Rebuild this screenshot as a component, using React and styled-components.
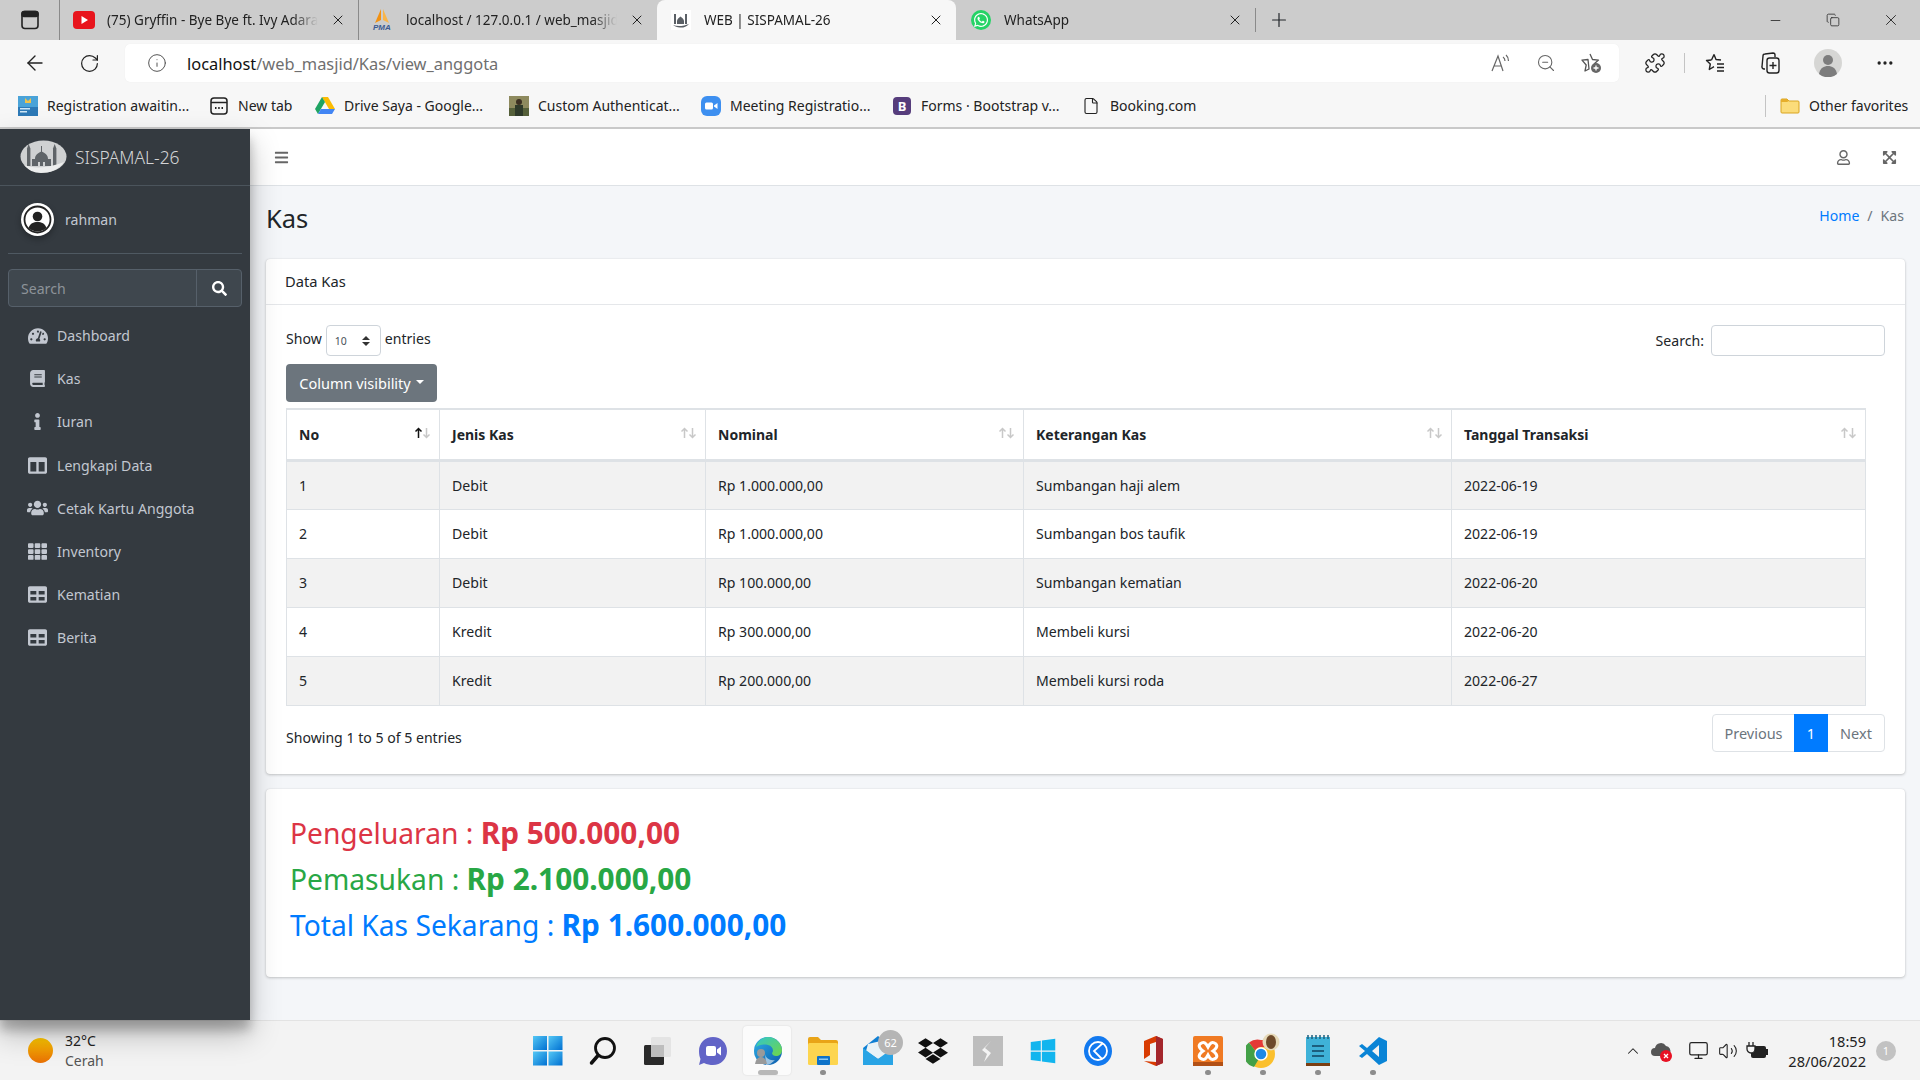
import React from "react"
import styled, { createGlobalStyle } from "styled-components"
import {
  ArrowLeft,
  RotateCw,
  Info,
  ZoomOut,
  Puzzle,
  X,
  Plus,
  Minus,
  Copy,
  MoreHorizontal,
  ChevronUp,
  Volume2,
  Monitor,
  File,
} from "lucide-react"
import {
  FaTachometerAlt,
  FaBook,
  FaInfo,
  FaColumns,
  FaUsers,
  FaTh,
  FaTable,
  FaSearch,
  FaRegUser,
  FaExpandArrowsAlt,
  FaBars,
  FaWhatsapp,
  FaDropbox,
  FaWindows,
} from "react-icons/fa"

const GlobalStyle = createGlobalStyle`
  html, body { margin: 0; padding: 0; height: 100%; }
  body {
    font-family: "Noto Sans", "Open Sans", sans-serif;
    font-size: 14.1px;
    color: #212529;
    overflow: hidden;
  }
  * { box-sizing: border-box; }
`

const Shell = styled.div`
  width: 1920px;
  height: 1080px;
  display: flex;
  flex-direction: column;
  overflow: hidden;
`

/* browser chrome */
const TabStrip = styled.div`
  height: 40px;
  background: #cccccc;
  display: flex;
  align-items: stretch;
  flex-shrink: 0;
`
const PanelButton = styled.div`
  width: 59px;
  display: flex;
  align-items: center;
  justify-content: center;
`
const Tab = styled.div`
  width: 299px;
  display: flex;
  align-items: center;
  padding: 0 12px 0 ${props => (props.$active ? "12px" : "13px")};
  gap: 12px;
  font-size: 13.5px;
  color: #222;
  background: ${props => (props.$active ? "#f7f7f7" : "transparent")};
  border-radius: ${props => (props.$active ? "8px 8px 0 0" : "0")};
  border-left: 1px solid ${props => (props.$line ? "#8a8a8a" : "transparent")};
  background-clip: ${props => (props.$line ? "padding-box" : "border-box")};
`
const TabIcon = styled.div`
  width: 22px;
  height: 22px;
  display: flex;
  align-items: center;
  justify-content: center;
  flex-shrink: 0;
`
const TabTitle = styled.div`
  flex: 1;
  white-space: nowrap;
  overflow: hidden;
  -webkit-mask-image: linear-gradient(to right, #000 88%, transparent 100%);
  mask-image: linear-gradient(to right, #000 88%, transparent 100%);
`
const NewTab = styled.div`
  width: 46px;
  display: flex;
  align-items: center;
  justify-content: center;
  border-left: 1px solid #8a8a8a;
  margin: 8px 0;
`
const WindowControls = styled.div`
  margin-left: auto;
  display: flex;
  align-items: center;
`
const WindowButton = styled.div`
  width: 58px;
  display: flex;
  justify-content: center;
  color: #222;
`

const Toolbar = styled.div`
  height: 46px;
  background: #f7f7f7;
  display: flex;
  align-items: center;
  flex-shrink: 0;
`
const ToolButton = styled.div`
  width: ${props => props.$w || 45}px;
  display: flex;
  justify-content: center;
  align-items: center;
  color: ${props => props.$color || "#222"};
  flex-shrink: 0;
`
const NavButtons = styled.div`
  display: flex;
  width: 125px;
  padding-left: 12px;
`
const AddressBar = styled.div`
  width: 1494px;
  height: 38px;
  background: #fff;
  border-radius: 5px;
  display: flex;
  align-items: center;
  padding: 0 5px 0 22px;
  box-shadow: 0 0 1px rgba(0, 0, 0, 0.08);
`
const Url = styled.div`
  margin-left: 20px;
  font-size: 16.4px;
  color: #6f6f6f;
  flex: 1;
  span { color: #111; }
`
const ToolDivider = styled.div`
  width: 1px;
  height: 20px;
  background: #c4c4c4;
  margin-left: 6px;
`
const RightTools = styled.div`
  display: flex;
  align-items: center;
  margin-left: 13px;
`

const BookmarkBar = styled.div`
  height: 43px;
  background: #f7f7f7;
  border-bottom: 2px solid #c9c9c9;
  display: flex;
  align-items: center;
  padding: 0 0 2px 18px;
  flex-shrink: 0;
  font-size: 14px;
  color: #222;
`
const Bookmark = styled.div`
  width: ${props => props.$w}px;
  display: flex;
  align-items: center;
  gap: 9px;
  white-space: nowrap;
  flex-shrink: 0;
`
const BookmarkIcon = styled.div`
  width: 20px;
  height: 20px;
  display: flex;
  align-items: center;
  justify-content: center;
  flex-shrink: 0;
`
const BarDivider = styled.div`
  width: 1px;
  height: 22px;
  background: #c4c4c4;
  margin-right: 14px;
  flex-shrink: 0;
`
const BootstrapBadge = styled.div`
  width: 18px;
  height: 18px;
  border-radius: 4px;
  background: #563d7c;
  color: #fff;
  font-size: 13px;
  font-weight: 700;
  display: flex;
  align-items: center;
  justify-content: center;
`

/* admin page */
const Page = styled.div`
  flex: 1;
  min-height: 0;
  display: flex;
  background: #f4f6f9;
`
const Sidebar = styled.aside`
  width: 250px;
  background: #343a40;
  flex-shrink: 0;
  color: #c2c7d0;
  box-shadow: 0 14px 28px rgba(0, 0, 0, 0.25), 0 10px 10px rgba(0, 0, 0, 0.22);
  position: relative;
  z-index: 2;
`
const Brand = styled.div`
  height: 57px;
  border-bottom: 1px solid #4b545c;
  display: flex;
  align-items: center;
  padding-left: 20px;
  gap: 8px;
  font-size: 17.4px;
  font-weight: 300;
  color: rgba(255, 255, 255, 0.8);
`
const UserPanel = styled.div`
  margin: 0 8px;
  height: 68px;
  border-bottom: 1px solid #4f5962;
  display: flex;
  align-items: center;
  gap: 11px;
  padding: 0 0 1px 13px;
`
const Avatar = styled.div`
  width: 33px;
  height: 33px;
  border-radius: 50%;
  background: #fff;
  display: flex;
  align-items: center;
  justify-content: center;
  box-shadow: 0 3px 6px rgba(0, 0, 0, 0.3);
`
const SideSearch = styled.div`
  margin: 15px 8px 0;
  height: 38px;
  display: flex;
  border: 1px solid #56606a;
  border-radius: 4px;
  background: #3f474e;
  overflow: hidden;
`
const SideInput = styled.div`
  flex: 1;
  padding-left: 12px;
  display: flex;
  align-items: center;
  color: #8d9399;
`
const SideSearchButton = styled.div`
  width: 45px;
  border-left: 1px solid #56606a;
  display: flex;
  align-items: center;
  justify-content: center;
  color: #fff;
`
const NavList = styled.nav`
  margin-top: 7px;
`
const NavItem = styled.div`
  height: 43.2px;
  display: flex;
  align-items: center;
`
const NavIcon = styled.div`
  width: 57px;
  padding: 0 9px 0 27px;
  display: flex;
  justify-content: center;
  flex-shrink: 0;
`

const Main = styled.main`
  flex: 1;
  min-width: 0;
  display: flex;
  flex-direction: column;
`
const TopNav = styled.div`
  height: 57px;
  background: #fff;
  border-bottom: 1px solid #dee2e6;
  display: flex;
  align-items: center;
  justify-content: space-between;
  padding: 0 23px 0 24px;
  color: rgba(0, 0, 0, 0.6);
  flex-shrink: 0;
`
const TopNavRight = styled.div`
  display: flex;
  align-items: center;
  gap: 31px;
`
const ContentHeader = styled.div`
  height: 73px;
  padding: 0 16px 10px 16px;
  display: flex;
  align-items: center;
  justify-content: space-between;
  flex-shrink: 0;
`
const Title = styled.h1`
  margin: 0;
  font-size: 25.5px;
  font-weight: 400;
  color: #212529;
`
const Breadcrumb = styled.div`
  color: #6c757d;
  display: flex;
  gap: 8px;
  margin-top: -5px;
  a { color: #007bff; }
`
const Card = styled.section`
  margin: 0 15px 15px 16px;
  background: #fff;
  border-radius: 4px;
  box-shadow: 0 0 1px rgba(0, 0, 0, 0.125), 0 1px 3px rgba(0, 0, 0, 0.2);
`
const CardHeader = styled.div`
  height: 46px;
  border-bottom: 1px solid #e5e7ea;
  display: flex;
  align-items: center;
  padding: 0 0 2px 19px;
  font-size: 14.7px;
`
const CardBody = styled.div`
  padding: 20px 20px 22px;
`
const Controls = styled.div`
  display: flex;
  justify-content: space-between;
  align-items: flex-start;
`
const LengthLabel = styled.div`
  display: flex;
  align-items: center;
  gap: 4px;
  height: 31px;
  padding-bottom: 4px;
`
const PageSelect = styled.div`
  width: 55px;
  height: 31px;
  margin-top: 4px;
  border: 1px solid #ced4da;
  border-radius: 4px;
  display: flex;
  align-items: center;
  justify-content: space-between;
  padding: 1px 10px 0 8px;
  font-size: 10.5px;
  color: #495057;
`
const SearchLabel = styled.div`
  display: flex;
  align-items: center;
  gap: 7px;
`
const SearchInput = styled.div`
  width: 174px;
  height: 31px;
  border: 1px solid #ced4da;
  border-radius: 4px;
`
const ColumnButton = styled.div`
  width: 151px;
  height: 38px;
  margin-top: 8px;
  background: #6c757d;
  border-radius: 4px;
  color: #fff;
  display: flex;
  align-items: center;
  justify-content: center;
  gap: 5px;
  font-size: 14.5px;
`
const Caret = styled.span`
  border-top: 4.5px solid #fff;
  border-left: 4.5px solid transparent;
  border-right: 4.5px solid transparent;
  margin-bottom: 2px;
`
const DataTable = styled.table`
  width: 1579px;
  margin-top: 6px;
  border-collapse: collapse;
  table-layout: fixed;
  border: 1px solid #dee2e6;
`
const HeadCell = styled.th`
  height: 51px;
  padding: 0 8px 0 12px;
  text-align: left;
  font-weight: 700;
  font-size: 14px;
  border: 1px solid #dee2e6;
  border-top-width: 2px;
  border-bottom-width: 3px;
`
const HeadInner = styled.div`
  display: flex;
  align-items: center;
  justify-content: space-between;
`
const SortArrows = styled.svg`
  width: 17px;
  height: 12px;
  margin-top: -3px;
`
const Row = styled.tr`
  background: ${props => (props.$odd ? "#f2f2f2" : "#fff")};
`
const Cell = styled.td`
  height: 49px;
  padding: 0 12px;
  border: 1px solid #dee2e6;
`
const TableFoot = styled.div`
  display: flex;
  justify-content: space-between;
  align-items: flex-start;
  margin-top: 8px;
`
const Showing = styled.div`
  padding-top: 14px;
`
const Pagination = styled.div`
  display: flex;
  height: 38px;
  border: 1px solid #dee2e6;
  border-radius: 4px;
  color: #6c757d;
  font-size: 14.5px;
`
const PageLink = styled.div`
  width: ${props => props.$w}px;
  display: flex;
  align-items: center;
  justify-content: center;
  background: ${props => (props.$active ? "#007bff" : "transparent")};
  color: ${props => (props.$active ? "#fff" : "inherit")};
  margin: ${props => (props.$active ? "-1px 0" : "0")};
`
const Summary = styled(Card)`
  height: 188px;
  padding: 25px 24px;
`
const SummaryLine = styled.h2`
  margin: 0 0 8px;
  height: 38.4px;
  line-height: 38.4px;
  font-size: 28.2px;
  font-weight: 400;
  color: ${props => props.$color};
  b { font-weight: 700; font-size: 29.8px; }
`

/* taskbar */
const Taskbar = styled.footer`
  height: 60px;
  background: #f3f3f3;
  border-top: 1px solid #e3e3e3;
  display: flex;
  flex-shrink: 0;
`
const Weather = styled.div`
  width: 520px;
  display: flex;
  align-items: center;
  padding-left: 28px;
  gap: 12px;
`
const Sun = styled.div`
  width: 25px;
  height: 25px;
  border-radius: 50%;
  background: linear-gradient(#fdc702, #e86f04);
`
const WeatherText = styled.div`
  font-size: 14px;
  line-height: 20px;
  color: #222;
  small { font-size: 14px; color: #555; display: block; }
`
const TaskIcons = styled.div`
  display: flex;
  width: 880px;
`
const TaskIcon = styled.div`
  width: 55px;
  height: 59px;
  position: relative;
  display: flex;
  align-items: center;
  justify-content: center;
  &::before {
    content: "";
    display: ${props => (props.$active ? "block" : "none")};
    position: absolute;
    left: 3px;
    right: 4px;
    top: 5px;
    bottom: 5px;
    background: #fbfbfb;
    border-radius: 4px;
    box-shadow: 0 0 2px rgba(0, 0, 0, 0.12);
  }
  &::after {
    content: "";
    display: ${props => (props.$running || props.$active ? "block" : "none")};
    position: absolute;
    bottom: 5px;
    left: 50%;
    transform: translateX(-50%);
    width: ${props => (props.$active ? 20 : 6)}px;
    height: 5px;
    border-radius: 3px;
    background: #8c8c8c;
    opacity: ${props => (props.$active ? 0.6 : 1)};
  }
  svg { position: relative; z-index: 1; }
`
const MailBadge = styled.div`
  position: absolute;
  top: 9px;
  right: 2px;
  width: 25px;
  height: 25px;
  border-radius: 50%;
  background: #b5b5b5;
  color: #fff;
  font-size: 11px;
  display: flex;
  align-items: center;
  justify-content: center;
  z-index: 2;
`
const Tray = styled.div`
  flex: 1;
  display: flex;
  align-items: center;
  justify-content: flex-end;
  padding-right: 24px;
  color: #222;
`
const TrayIcon = styled.div`
  width: ${props => props.$w}px;
  display: flex;
  justify-content: center;
`
const Clock = styled.div`
  margin-left: 14px;
  font-size: 14.6px;
  line-height: 20px;
  text-align: right;
  color: #222;
`
const NotifyDot = styled.div`
  width: 20px;
  height: 20px;
  margin-left: 10px;
  border-radius: 50%;
  background: #c2c2c2;
  color: #fff;
  font-size: 11px;
  display: flex;
  align-items: center;
  justify-content: center;
`
const WhatsappDisc = styled.div`
  width: 20px;
  height: 20px;
  border-radius: 50%;
  background: #25d366;
  color: #fff;
  display: flex;
  align-items: center;
  justify-content: center;
`

const MosqueLogo = () => (
  <svg width="47" height="34" viewBox="0 0 47 34">
    <ellipse cx="23.5" cy="16.5" rx="23" ry="16" fill="#cfd1d2" />
    <g fill="#5f6468">
      <rect x="7" y="9" width="3.4" height="17" />
      <rect x="33" y="9" width="3.4" height="17" />
      <polygon points="8.7,4 10.6,9 6.8,9" />
      <polygon points="34.7,4 36.6,9 32.8,9" />
      <path d="M12 26v-7h3c0-4 3-6 6.5-7.5C25 13 28 15 28 19h3v7z" />
      <rect x="21" y="6" width="1" height="6" />
    </g>
    <path d="M18 26v-4h2v4zM23 26v-4h2v4z" fill="#cfd1d2" />
    <path d="M4 25c10 4 26 3 40-3-5 8-15 11-23 11-7 0-13-3-17-8z" fill="#eceded" />
  </svg>
)

const UserGlyph = () => (
  <svg width="29" height="29" viewBox="0 0 29 29" fill="none">
    <circle cx="14.5" cy="14.5" r="13" stroke="#222" strokeWidth="1.8" />
    <circle cx="14.5" cy="11.5" r="4.8" fill="#222" />
    <path d="M5.5 23c1.5-4.5 5-6 9-6s7.5 1.5 9 6c-2.5 2.3-5.5 3.5-9 3.5S8 25.3 5.5 23z" fill="#222" />
  </svg>
)

const YoutubeFav = () => (
  <svg width="22" height="18" viewBox="0 0 22 18">
    <rect width="22" height="18" rx="4" fill="#e8141c" />
    <polygon points="8.5,5 15,9 8.5,13" fill="#fff" />
  </svg>
)
const PmaFav = () => (
  <svg width="22" height="24" viewBox="0 0 22 24">
    <polygon points="9,1 3,15 9,12" fill="#f29111" />
    <polygon points="11,1 17,15 11,12" fill="#f9b54a" />
    <text x="1" y="22" fontSize="8" fontStyle="italic" fontWeight="700" fill="#3a5a92" fontFamily="Liberation Sans">PMA</text>
  </svg>
)
const SiteFav = () => (
  <svg width="20" height="20" viewBox="0 0 20 20">
    <rect width="20" height="20" fill="#fff" />
    <g fill="#5b6066">
      <rect x="3" y="4" width="2" height="10" />
      <rect x="14" y="4" width="2" height="10" />
      <path d="M6 14v-3c0-2 2-3 3.5-4.5C11 8 13 9 13 11v3z" />
      <path d="M2 15c5 2 11 1 16-1-3 3-6 4-9 3.5-3-.3-5-1-7-2.5z" />
    </g>
  </svg>
)
const RegistrationIcon = () => (
  <svg width="20" height="20" viewBox="0 0 20 20">
    <rect width="20" height="20" fill="#4aa3d8" />
    <rect y="11" width="20" height="9" fill="#2d79b6" />
    <polygon points="7,2 10,5 13,2 13,7 7,7" fill="#f0c24a" />
    <rect x="2" y="12" width="10" height="1.5" fill="#cfe7f6" />
    <rect x="2" y="15" width="7" height="1.5" fill="#cfe7f6" />
  </svg>
)
const NewTabIcon = () => (
  <svg width="18" height="20" viewBox="0 0 18 20" fill="none" stroke="#222" strokeWidth="1.5">
    <rect x="1" y="2" width="16" height="16" rx="3" />
    <path d="M1 6.5h16" />
    <path d="M5 12h1.5M8.2 12h1.5M11.5 12h1.5" strokeWidth="2" />
  </svg>
)
const DriveIcon = () => (
  <svg width="20" height="18" viewBox="0 0 20 18">
    <polygon points="7,0 13,0 20,12 14,12" fill="#fbbc04" />
    <polygon points="7,0 0,12 3,17 10,5" fill="#1fa463" />
    <polygon points="3,17 17,17 20,12 6,12" fill="#4285f4" />
  </svg>
)
const PhotoIcon = () => (
  <svg width="20" height="20" viewBox="0 0 20 20">
    <rect width="20" height="20" fill="#8e8a5e" />
    <rect y="12" width="20" height="8" fill="#55603a" />
    <circle cx="10" cy="6" r="3" fill="#3b2f22" />
    <rect x="6" y="9" width="8" height="11" fill="#2f3a2a" />
  </svg>
)
const ZoomIcon = () => (
  <svg width="20" height="20" viewBox="0 0 20 20">
    <rect width="20" height="20" rx="6" fill="#3d8ff0" />
    <rect x="4" y="6.5" width="8" height="7" rx="1.5" fill="#fff" />
    <polygon points="13,9.5 16.5,7 16.5,13 13,10.5" fill="#fff" />
  </svg>
)
const FolderIcon = () => (
  <svg width="20" height="20" viewBox="0 0 20 20">
    <path d="M1 4a1 1 0 0 1 1-1h5l2 2h9a1 1 0 0 1 1 1v10a1 1 0 0 1-1 1H2a1 1 0 0 1-1-1z" fill="#fbdc7a" stroke="#d9a520" />
    <path d="M1 4a1 1 0 0 1 1-1h5l2 2-2 1H1z" fill="#e6ae2b" />
  </svg>
)
const StarPlus = () => (
  <svg width="22" height="22" viewBox="0 0 22 22" fill="none" stroke="#555" strokeWidth="1.3">
    <path d="M10 2l2.5 5.5 6 .6-4.5 4M9 17l-4 2 1.2-6L2 8.1l6-.6z" strokeLinejoin="round" />
    <circle cx="16" cy="16" r="5" fill="#666" stroke="none" />
    <path d="M16 13.5v5M13.5 16h5" stroke="#fff" />
  </svg>
)
const FavList = () => (
  <svg width="22" height="22" viewBox="0 0 22 22" fill="none" stroke="#222" strokeWidth="1.4">
    <path d="M10 2.5l2 5 5 .5M7.5 8l-5 .5 3.8 3.5-1 5.5 4.7-2.8" strokeLinejoin="round" />
    <path d="M7.5 8l2.5-5.5M13 12h7M13 15.5h7M13 19h7" />
  </svg>
)
const Collections = () => (
  <svg width="22" height="24" viewBox="0 0 22 24" fill="none" stroke="#222" strokeWidth="1.4">
    <path d="M6 18H5a2 2 0 0 1-2-2.3L4 5a2 2 0 0 1 2-2l8-1a2 2 0 0 1 2 2v2" />
    <rect x="8" y="7" width="12" height="15" rx="2.5" />
    <path d="M14 11v7M10.5 14.5h7" />
  </svg>
)
const ProfileAvatar = () => (
  <svg width="28" height="28" viewBox="0 0 28 28">
    <circle cx="14" cy="14" r="14" fill="#d6d6d4" />
    <circle cx="14" cy="11" r="5" fill="#7d7d7d" />
    <path d="M5 25c1-6 5-8 9-8s8 2 9 8a14 14 0 0 1-18 0z" fill="#7d7d7d" />
  </svg>
)
const ReadAloud = () => (
  <svg width="22" height="20" viewBox="0 0 22 20" fill="none" stroke="#666" strokeWidth="1.2">
    <path d="M2 18L8 3l5 15M4 13h7" />
    <path d="M13 4c1.5 1 2 2.5 2 4M16 2c1.8 1.5 2.5 3.5 2.5 6" />
  </svg>
)
const PanelIcon = () => (
  <svg width="18" height="20" viewBox="0 0 18 20" fill="none" stroke="#222" strokeWidth="1.6">
    <rect x="1" y="1.5" width="16" height="17" rx="3" />
    <rect x="1" y="1.5" width="16" height="5" rx="2" fill="#222" />
  </svg>
)

const Win11 = () => (
  <svg width="30" height="30" viewBox="0 0 30 30">
    <defs>
      <linearGradient id="win11" x1="0" y1="0" x2="1" y2="1">
        <stop offset="0" stopColor="#55c8f5" />
        <stop offset="1" stopColor="#0070d2" />
      </linearGradient>
    </defs>
    <rect width="14" height="14" fill="url(#win11)" />
    <rect x="15.5" width="14" height="14" fill="url(#win11)" />
    <rect y="15.5" width="14" height="14" fill="url(#win11)" />
    <rect x="15.5" y="15.5" width="14" height="14" fill="url(#win11)" />
  </svg>
)
const SearchGlass = () => (
  <svg width="30" height="30" viewBox="0 0 30 30" fill="none" stroke="#111" strokeWidth="2.8">
    <circle cx="17" cy="12" r="9.5" />
    <path d="M10 19.5L3.5 27" strokeLinecap="round" strokeWidth="3.5" />
  </svg>
)
const TaskView = () => (
  <svg width="30" height="30" viewBox="0 0 30 30">
    <rect x="8" y="1" width="20" height="20" rx="1.5" fill="#e4e4e4" />
    <rect x="1" y="9" width="20" height="20" rx="1.5" fill="#2a2a2a" />
    <rect x="8" y="9" width="13" height="12" fill="#bdbdbd" />
  </svg>
)
const ChatIcon = () => (
  <svg width="30" height="30" viewBox="0 0 30 30">
    <path d="M15 1c8 0 14 6 14 14s-6 14-14 14c-3 0-6-.6-9-2l-5 2 1.5-6C1.5 21 1 18 1 15 1 7 7 1 15 1z" fill="#6264c7" />
    <rect x="8" y="10" width="10" height="10" rx="2" fill="#fff" />
    <polygon points="19,13.5 23,10.5 23,19.5 19,16.5" fill="#fff" />
  </svg>
)
const EdgeIcon = () => (
  <svg width="30" height="30" viewBox="0 0 30 30">
    <defs>
      <linearGradient id="edgeA" x1="0" y1="0" x2="1" y2="1">
        <stop offset="0" stopColor="#2fb0e6" />
        <stop offset="1" stopColor="#0d5cad" />
      </linearGradient>
      <linearGradient id="edgeB" x1="0" y1="0" x2="1" y2="1">
        <stop offset="0" stopColor="#33c6c9" />
        <stop offset="1" stopColor="#6fd648" />
      </linearGradient>
    </defs>
    <circle cx="15" cy="15" r="14" fill="url(#edgeA)" />
    <path d="M3 11C5 4 11 1 15 1c7 0 14 6 14 13 0 4-3 6-6 6-2 0-4-1-4-3 2-2 1-7-4-8-5-1-9 0-12 2z" fill="url(#edgeB)" />
    <path d="M12 17c0 5 5 8 10 7-3 3-6 5-9 5" fill="#f7f7f7" opacity=".6" />
    <circle cx="8" cy="17" r="4" fill="#9a9a9a" />
    <path d="M2 28c1-5 3-7 6-7s5 2 6 7z" fill="#9a9a9a" />
  </svg>
)
const ExplorerIcon = () => (
  <svg width="30" height="30" viewBox="0 0 30 30">
    <path d="M0 3a2 2 0 0 1 2-2h8l3 3h15a2 2 0 0 1 2 2v4H0z" fill="#e9a417" />
    <rect y="7" width="30" height="22" rx="1.5" fill="#fdd54f" />
    <rect x="9" y="20" width="13" height="9" rx="1" fill="#0f73c9" />
    <rect x="11" y="22.5" width="9" height="1.5" fill="#8ecbf3" />
  </svg>
)
const MailIcon = () => (
  <svg width="30" height="30" viewBox="0 0 30 30">
    <polygon points="0,12 15,0 30,12 30,29 0,29" fill="#0f7fd3" />
    <polygon points="5,8 22,4 27,17 15,23 3,15" fill="#e9f3f7" />
    <polygon points="0,12 15,23 30,12 30,29 0,29" fill="#29a4e5" />
  </svg>
)
const SublimeIcon = () => (
  <svg width="30" height="30" viewBox="0 0 30 30">
    <rect width="30" height="30" fill="#bdbdbd" />
    <path d="M18 5l-6 7 6 5-7 9 3-8-5-4z" fill="#f4f4f4" />
  </svg>
)
const ClockCircle = () => (
  <svg width="28" height="30" viewBox="0 0 28 30">
    <ellipse cx="14" cy="15" rx="14" ry="15" fill="#1279ef" />
    <circle cx="14" cy="15" r="9" fill="none" stroke="#fff" strokeWidth="1.8" />
    <path d="M19 7L10 15l8 8" fill="none" stroke="#fff" strokeWidth="1.8" />
  </svg>
)
const OfficeIcon = () => (
  <svg width="24" height="32" viewBox="0 0 24 32">
    <path d="M3 6L15 1l7 3v24l-7 3-12-5 12 1V7L9 9v11l-6 4z" fill="#d83b01" />
    <path d="M15 1l7 3v24l-7 3z" fill="#a4262c" />
  </svg>
)
const XamppIcon = () => (
  <svg width="30" height="30" viewBox="0 0 30 30">
    <rect width="30" height="30" rx="2" fill="#f07a23" />
    <rect x="0" y="26" width="30" height="4" fill="#b25015" />
    <path d="M7 8c4-3 6-1 8 3 2-4 4-6 8-3 2 2 0 5-3 7 3 2 5 5 3 7-4 3-6 1-8-3-2 4-4 6-8 3-2-2 0-5 3-7-3-2-5-5-3-7z" fill="none" stroke="#fff" strokeWidth="3" />
  </svg>
)
const ChromeIcon = () => (
  <svg width="34" height="36" viewBox="0 0 34 36">
    <circle cx="15" cy="21" r="14" fill="#fbc02d" />
    <path d="M15 7a14 14 0 0 1 12 7H15a7 7 0 0 0-6 3.5L3 9.5A14 14 0 0 1 15 7z" fill="#e53935" />
    <path d="M3 9.5a14 14 0 0 0 5 24.5l6-10a7 7 0 0 1-5-6.5z" fill="#43a047" />
    <circle cx="15" cy="21" r="6" fill="#1e88e5" stroke="#fff" strokeWidth="1.5" />
    <circle cx="25" cy="9" r="8.5" fill="#e6d9b8" />
    <ellipse cx="25" cy="9" rx="5" ry="7" fill="#6e4a2a" />
  </svg>
)
const NotepadIcon = () => (
  <svg width="24" height="32" viewBox="0 0 24 32">
    <rect y="2" width="24" height="28" fill="#3fb2d8" />
    <rect y="28" width="24" height="3" fill="#7a3e12" />
    <path d="M2 0v4M6 0v4M10 0v4M14 0v4M18 0v4M22 0v4" stroke="#1c5f7e" strokeWidth="1.5" />
    <path d="M6 11h12M6 16h12M6 21h12" stroke="#1c5f7e" strokeWidth="2" />
  </svg>
)
const VscodeIcon = () => (
  <svg width="30" height="30" viewBox="0 0 30 30">
    <path d="M21 1l8 4v20l-8 4L9 18l-5 4-3-2 6-5-6-5 3-2 5 4zM21 9l-7 6 7 6z" fill="#0a84d6" fillRule="evenodd" />
  </svg>
)
const CloudAlert = () => (
  <svg width="24" height="24" viewBox="0 0 24 24">
    <path d="M4 17a4 4 0 0 1 0-8 6 6 0 0 1 11-2 5 5 0 0 1 4 7v3z" fill="#555" />
    <circle cx="15" cy="17" r="6" fill="#e81123" />
    <path d="M13 15l4 4M17 15l-4 4" stroke="#fff" strokeWidth="1.3" />
  </svg>
)
const Battery = () => (
  <svg width="24" height="22" viewBox="0 0 24 22">
    <rect x="5" y="6" width="15" height="12" rx="2" fill="#222" />
    <rect x="20" y="9" width="2" height="6" fill="#222" />
    <path d="M3 2v4M7 2v4M1 6h8v3a4 4 0 0 1-8 0z" stroke="#222" fill="#f3f3f3" strokeWidth="1.3" />
  </svg>
)

const navItems = [
  { icon: <FaTachometerAlt size={20} />, label: "Dashboard" },
  { icon: <FaBook size={17} />, label: "Kas" },
  { icon: <FaInfo size={17} />, label: "Iuran" },
  { icon: <FaColumns size={19} />, label: "Lengkapi Data" },
  { icon: <FaUsers size={22} />, label: "Cetak Kartu Anggota" },
  { icon: <FaTh size={19} />, label: "Inventory" },
  { icon: <FaTable size={19} />, label: "Kematian" },
  { icon: <FaTable size={19} />, label: "Berita" },
]

const columns = [
  { title: "No", width: 153, active: true },
  { title: "Jenis Kas", width: 266 },
  { title: "Nominal", width: 318 },
  { title: "Keterangan Kas", width: 428 },
  { title: "Tanggal Transaksi", width: 414 },
]

const rows = [
  ["1", "Debit", "Rp 1.000.000,00", "Sumbangan haji alem", "2022-06-19"],
  ["2", "Debit", "Rp 1.000.000,00", "Sumbangan bos taufik", "2022-06-19"],
  ["3", "Debit", "Rp 100.000,00", "Sumbangan kematian", "2022-06-20"],
  ["4", "Kredit", "Rp 300.000,00", "Membeli kursi", "2022-06-20"],
  ["5", "Kredit", "Rp 200.000,00", "Membeli kursi roda", "2022-06-27"],
]

const bookmarks = [
  { icon: <RegistrationIcon />, label: "Registration awaitin...", w: 191 },
  { icon: <NewTabIcon />, label: "New tab", w: 106 },
  { icon: <DriveIcon />, label: "Drive Saya - Google...", w: 194 },
  { icon: <PhotoIcon />, label: "Custom Authenticat...", w: 192 },
  { icon: <ZoomIcon />, label: "Meeting Registratio...", w: 191 },
  { icon: <BootstrapBadge>B</BootstrapBadge>, label: "Forms · Bootstrap v...", w: 189 },
  { icon: <File size={18} strokeWidth={1.5} />, label: "Booking.com", w: 684 },
]

const SortIcon = ({ active }) => (
  <SortArrows viewBox="0 0 17 12" fill="none" strokeWidth="1.5">
    <path d="M4.5 11V1.5M1.5 4.5l3-3 3 3" stroke={active ? "#111" : "#c8c8c8"} />
    <path d="M12.5 1v9.5M9.5 7.5l3 3 3-3" stroke="#c8c8c8" />
  </SortArrows>
)

const App = () => (
  <Shell>
    <GlobalStyle />
    <TabStrip>
      <PanelButton>
        <PanelIcon />
      </PanelButton>
      <Tab $line>
        <TabIcon><YoutubeFav /></TabIcon>
        <TabTitle>(75) Gryffin - Bye Bye ft. Ivy Adara</TabTitle>
        <X size={16} strokeWidth={1.5} />
      </Tab>
      <Tab $line>
        <TabIcon><PmaFav /></TabIcon>
        <TabTitle>localhost / 127.0.0.1 / web_masjid</TabTitle>
        <X size={16} strokeWidth={1.5} />
      </Tab>
      <Tab $active>
        <TabIcon><SiteFav /></TabIcon>
        <TabTitle>WEB | SISPAMAL-26</TabTitle>
        <X size={16} strokeWidth={1.5} />
      </Tab>
      <Tab>
        <TabIcon>
          <WhatsappDisc><FaWhatsapp size={16} /></WhatsappDisc>
        </TabIcon>
        <TabTitle>WhatsApp</TabTitle>
        <X size={16} strokeWidth={1.5} />
      </Tab>
      <NewTab>
        <Plus size={22} strokeWidth={1.3} />
      </NewTab>
      <WindowControls>
        <WindowButton><Minus size={15} strokeWidth={1.3} /></WindowButton>
        <WindowButton><Copy size={14} strokeWidth={1.3} /></WindowButton>
        <WindowButton><X size={18} strokeWidth={1.2} /></WindowButton>
      </WindowControls>
    </TabStrip>

    <Toolbar>
      <NavButtons>
        <ToolButton><ArrowLeft size={24} strokeWidth={1.4} /></ToolButton>
        <ToolButton $w={64}><RotateCw size={21} strokeWidth={1.4} /></ToolButton>
      </NavButtons>
      <AddressBar>
        <Info size={20} strokeWidth={1.2} color="#555" />
        <Url><span>localhost</span>/web_masjid/Kas/view_anggota</Url>
        <ToolButton $color="#666"><ReadAloud /></ToolButton>
        <ToolButton $color="#666"><ZoomOut size={20} strokeWidth={1.3} /></ToolButton>
        <ToolButton $w={46}><StarPlus /></ToolButton>
      </AddressBar>
      <RightTools>
        <ToolButton $w={46}><Puzzle size={22} strokeWidth={1.4} /></ToolButton>
        <ToolDivider />
        <ToolButton $w={60}><FavList /></ToolButton>
        <ToolButton $w={50}><Collections /></ToolButton>
        <ToolButton $w={65}><ProfileAvatar /></ToolButton>
        <ToolButton $w={50}><MoreHorizontal size={20} strokeWidth={2} /></ToolButton>
      </RightTools>
    </Toolbar>

    <BookmarkBar>
      {bookmarks.map(b => (
        <Bookmark key={b.label} $w={b.w}>
          <BookmarkIcon>{b.icon}</BookmarkIcon>
          {b.label}
        </Bookmark>
      ))}
      <BarDivider />
      <Bookmark $w={140}>
        <BookmarkIcon><FolderIcon /></BookmarkIcon>
        Other favorites
      </Bookmark>
    </BookmarkBar>

    <Page>
      <Sidebar>
        <Brand>
          <MosqueLogo />
          SISPAMAL-26
        </Brand>
        <UserPanel>
          <Avatar><UserGlyph /></Avatar>
          rahman
        </UserPanel>
        <SideSearch>
          <SideInput>Search</SideInput>
          <SideSearchButton><FaSearch size={15} /></SideSearchButton>
        </SideSearch>
        <NavList>
          {navItems.map(item => (
            <NavItem key={item.label}>
              <NavIcon>{item.icon}</NavIcon>
              {item.label}
            </NavItem>
          ))}
        </NavList>
      </Sidebar>

      <Main>
        <TopNav>
          <FaBars size={15} />
          <TopNavRight>
            <FaRegUser size={15} />
            <FaExpandArrowsAlt size={15} />
          </TopNavRight>
        </TopNav>
        <ContentHeader>
          <Title>Kas</Title>
          <Breadcrumb>
            <a>Home</a>
            <span>/</span>
            <span>Kas</span>
          </Breadcrumb>
        </ContentHeader>
        <Card>
          <CardHeader>Data Kas</CardHeader>
          <CardBody>
            <Controls>
              <div>
                <LengthLabel>
                  Show
                  <PageSelect>
                    10
                    <svg width="8" height="12" viewBox="0 0 8 12" fill="#333">
                      <polygon points="4,1 8,5 0,5" />
                      <polygon points="0,7 8,7 4,11" />
                    </svg>
                  </PageSelect>
                  entries
                </LengthLabel>
                <ColumnButton>Column visibility<Caret /></ColumnButton>
              </div>
              <SearchLabel>
                Search:
                <SearchInput />
              </SearchLabel>
            </Controls>
            <DataTable>
              <colgroup>
                {columns.map(c => <col key={c.title} width={c.width} />)}
              </colgroup>
              <thead>
                <tr>
                  {columns.map(c => (
                    <HeadCell key={c.title}>
                      <HeadInner>
                        {c.title}
                        <SortIcon active={c.active} />
                      </HeadInner>
                    </HeadCell>
                  ))}
                </tr>
              </thead>
              <tbody>
                {rows.map((r, i) => (
                  <Row key={r[0]} $odd={i % 2 === 0}>
                    {r.map((v, j) => <Cell key={j}>{v}</Cell>)}
                  </Row>
                ))}
              </tbody>
            </DataTable>
            <TableFoot>
              <Showing>Showing 1 to 5 of 5 entries</Showing>
              <Pagination>
                <PageLink $w={81}>Previous</PageLink>
                <PageLink $w={34} $active>1</PageLink>
                <PageLink $w={56}>Next</PageLink>
              </Pagination>
            </TableFoot>
          </CardBody>
        </Card>
        <Summary>
          <SummaryLine $color="#dc3545">Pengeluaran : <b>Rp 500.000,00</b></SummaryLine>
          <SummaryLine $color="#28a745">Pemasukan : <b>Rp 2.100.000,00</b></SummaryLine>
          <SummaryLine $color="#007bff">Total Kas Sekarang : <b>Rp 1.600.000,00</b></SummaryLine>
        </Summary>
      </Main>
    </Page>

    <Taskbar>
      <Weather>
        <Sun />
        <WeatherText>
          32°C
          <small>Cerah</small>
        </WeatherText>
      </Weather>
      <TaskIcons>
        <TaskIcon><Win11 /></TaskIcon>
        <TaskIcon><SearchGlass /></TaskIcon>
        <TaskIcon><TaskView /></TaskIcon>
        <TaskIcon><ChatIcon /></TaskIcon>
        <TaskIcon $active><EdgeIcon /></TaskIcon>
        <TaskIcon $running><ExplorerIcon /></TaskIcon>
        <TaskIcon><MailIcon /><MailBadge>62</MailBadge></TaskIcon>
        <TaskIcon><FaDropbox size={30} color="#111" /></TaskIcon>
        <TaskIcon><SublimeIcon /></TaskIcon>
        <TaskIcon><FaWindows size={28} color="#12b5ee" /></TaskIcon>
        <TaskIcon><ClockCircle /></TaskIcon>
        <TaskIcon><OfficeIcon /></TaskIcon>
        <TaskIcon $running><XamppIcon /></TaskIcon>
        <TaskIcon $running><ChromeIcon /></TaskIcon>
        <TaskIcon $running><NotepadIcon /></TaskIcon>
        <TaskIcon $running><VscodeIcon /></TaskIcon>
      </TaskIcons>
      <Tray>
        <TrayIcon $w={18}><ChevronUp size={20} strokeWidth={1.4} /></TrayIcon>
        <TrayIcon $w={41}><CloudAlert /></TrayIcon>
        <TrayIcon $w={30}><Monitor size={21} strokeWidth={1.4} /></TrayIcon>
        <TrayIcon $w={29}><Volume2 size={20} strokeWidth={1.3} /></TrayIcon>
        <TrayIcon $w={32}><Battery /></TrayIcon>
        <Clock>
          18:59
          <br />
          28/06/2022
        </Clock>
        <NotifyDot>1</NotifyDot>
      </Tray>
    </Taskbar>
  </Shell>
)

export default App
